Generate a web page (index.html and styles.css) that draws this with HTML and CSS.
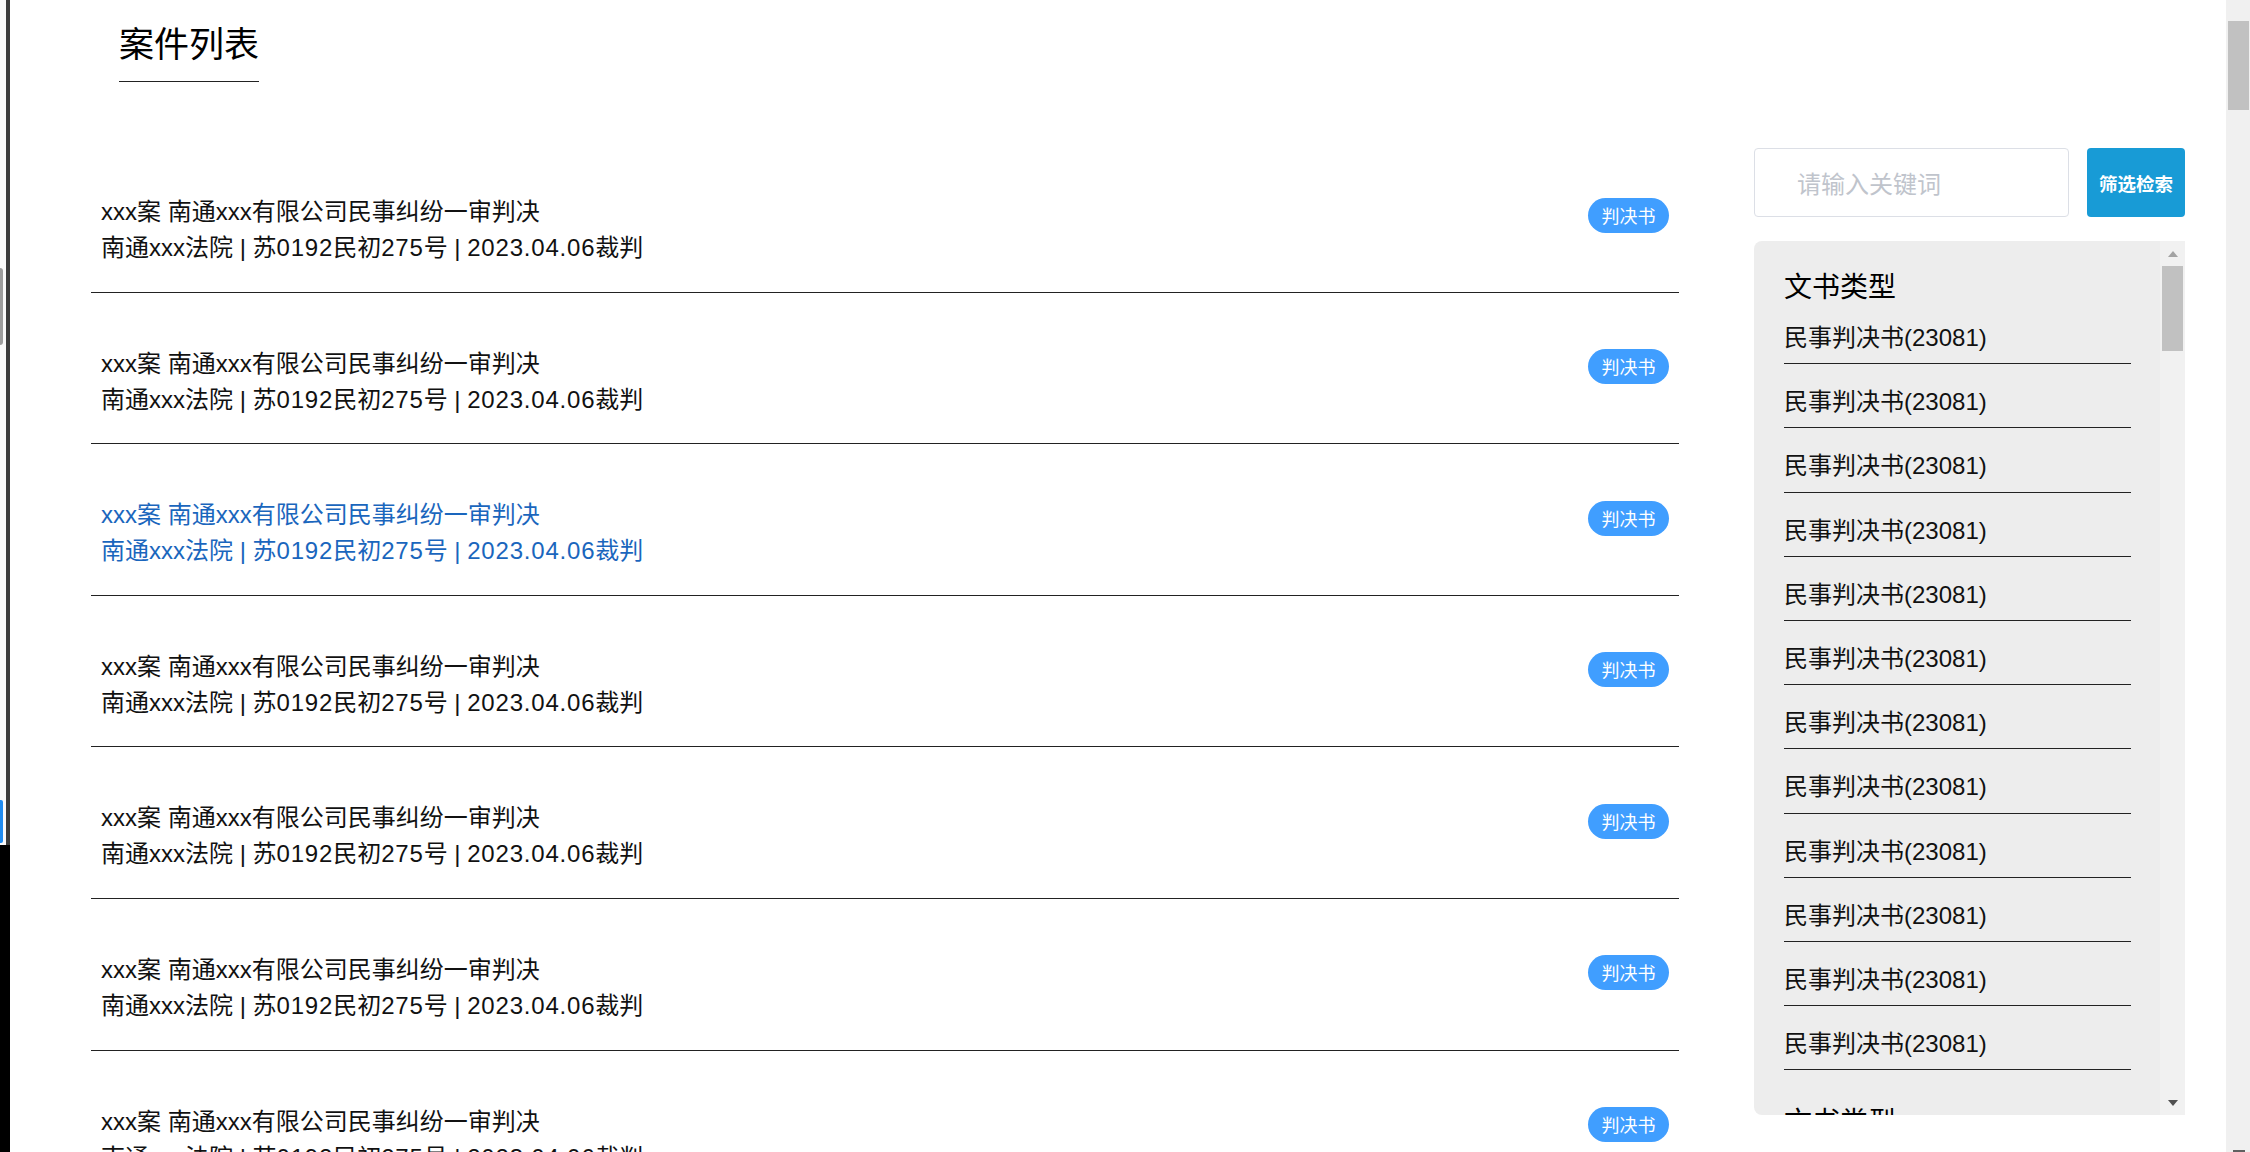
FILE: index.html
```html
<!DOCTYPE html>
<html lang="zh-CN">
<head>
<meta charset="utf-8">
<title>案件列表</title>
<link rel="stylesheet" href="styles.css">
</head>
<body>
<div class="frame">
  <div class="edge">
    <div class="edge-top">
      <div class="edge-light">
        <div class="edge-gray"></div>
        <div class="edge-blue"></div>
      </div>
      <div class="edge-dark"></div>
    </div>
    <div class="edge-bottom"></div>
  </div>

  <div class="page">
    <div class="header">
      <h2 class="title">案件列表</h2>
    </div>

    <div class="content">
      <div class="list">
        <div class="row">
          <div class="row-text"><div>xxx案 南通xxx有限公司民事纠纷一审判决</div><div>南通xxx法院 | 苏<span class="num">0192</span>民初<span class="num">275</span>号 | <span class="num">2023.04.06</span>裁判</div></div>
          <span class="badge">判决书</span>
        </div>
        <div class="row">
          <div class="row-text"><div>xxx案 南通xxx有限公司民事纠纷一审判决</div><div>南通xxx法院 | 苏<span class="num">0192</span>民初<span class="num">275</span>号 | <span class="num">2023.04.06</span>裁判</div></div>
          <span class="badge">判决书</span>
        </div>
        <div class="row row-active">
          <div class="row-text"><div>xxx案 南通xxx有限公司民事纠纷一审判决</div><div>南通xxx法院 | 苏<span class="num">0192</span>民初<span class="num">275</span>号 | <span class="num">2023.04.06</span>裁判</div></div>
          <span class="badge">判决书</span>
        </div>
        <div class="row">
          <div class="row-text"><div>xxx案 南通xxx有限公司民事纠纷一审判决</div><div>南通xxx法院 | 苏<span class="num">0192</span>民初<span class="num">275</span>号 | <span class="num">2023.04.06</span>裁判</div></div>
          <span class="badge">判决书</span>
        </div>
        <div class="row">
          <div class="row-text"><div>xxx案 南通xxx有限公司民事纠纷一审判决</div><div>南通xxx法院 | 苏<span class="num">0192</span>民初<span class="num">275</span>号 | <span class="num">2023.04.06</span>裁判</div></div>
          <span class="badge">判决书</span>
        </div>
        <div class="row">
          <div class="row-text"><div>xxx案 南通xxx有限公司民事纠纷一审判决</div><div>南通xxx法院 | 苏<span class="num">0192</span>民初<span class="num">275</span>号 | <span class="num">2023.04.06</span>裁判</div></div>
          <span class="badge">判决书</span>
        </div>
        <div class="row">
          <div class="row-text"><div>xxx案 南通xxx有限公司民事纠纷一审判决</div><div>南通xxx法院 | 苏<span class="num">0192</span>民初<span class="num">275</span>号 | <span class="num">2023.04.06</span>裁判</div></div>
          <span class="badge">判决书</span>
        </div>
      </div>

      <div class="side">
        <div class="search">
          <input class="search-input" type="text" placeholder="请输入关键词">
          <button class="search-btn" type="button">筛选检索</button>
        </div>
        <div class="panel">
          <div class="panel-body">
            <div class="group">
              <h3 class="group-title">文书类型</h3>
              <div class="item">民事判决书(23081)</div>
              <div class="item">民事判决书(23081)</div>
              <div class="item">民事判决书(23081)</div>
              <div class="item">民事判决书(23081)</div>
              <div class="item">民事判决书(23081)</div>
              <div class="item">民事判决书(23081)</div>
              <div class="item">民事判决书(23081)</div>
              <div class="item">民事判决书(23081)</div>
              <div class="item">民事判决书(23081)</div>
              <div class="item">民事判决书(23081)</div>
              <div class="item">民事判决书(23081)</div>
              <div class="item">民事判决书(23081)</div>
            </div>
            <div class="group">
              <h3 class="group-title">文书类型</h3>
              <div class="item">民事判决书(23081)</div>
              <div class="item">民事判决书(23081)</div>
            </div>
          </div>
          <div class="panel-scroll">
            <div class="arrow-up"></div>
            <div class="panel-thumb"></div>
            <div class="arrow-down"></div>
          </div>
        </div>
      </div>
    </div>
  </div>

  <div class="page-scroll">
    <div class="page-thumb"></div>
    <div class="page-arrow-down"></div>
  </div>
</div>
</body>
</html>
```

FILE: styles.css
```css
html, body {
  margin: 0;
  padding: 0;
  height: 100%;
  overflow: hidden;
  background: #ffffff;
}

body {
  font-family: "Noto Sans CJK SC", "Microsoft YaHei", sans-serif;
  color: #111111;
}

.frame {
  display: flex;
  width: 2250px;
  height: 1152px;
}

/* left window edge */
.edge {
  flex: 0 0 10px;
  display: flex;
  flex-direction: column;
}

.edge-top {
  height: 845px;
  display: flex;
}

.edge-light {
  width: 6px;
  background: #f9f9f9;
  display: flex;
  flex-direction: column;
  padding-top: 268px;
  box-sizing: border-box;
}

.edge-gray {
  width: 3px;
  height: 77px;
  background: #9c9c9c;
  border-radius: 0 3px 3px 0;
}

.edge-blue {
  width: 3px;
  height: 43px;
  margin-top: auto;
  margin-bottom: 2px;
  background: #1f8bf0;
  border-radius: 0 2px 2px 0;
}

.edge-dark {
  width: 4px;
  background: #3b3b3b;
}

.edge-bottom {
  flex: 1;
  background: #000000;
}

/* main page */
.page {
  flex: 1;
  overflow: hidden;
}

.header {
  padding: 15px 0 0 109px;
}

.title {
  display: inline-block;
  margin: 0;
  font-size: 35px;
  line-height: 54px;
  font-weight: normal;
  color: #000;
  padding-bottom: 12px;
  border-bottom: 1px solid #222;
}

.content {
  display: flex;
  align-items: flex-start;
  margin-top: 59px;
  padding: 0 41px 0 81px;
}

.list {
  flex: 0 0 1588px;
}

.row {
  display: flex;
  justify-content: space-between;
  align-items: flex-start;
  box-sizing: border-box;
  height: 151.6px;
  padding: 53px 10px 0;
  border-bottom: 1px solid #222;
  color: #111;
}

.row-text {
  font-family: "Liberation Sans", "Noto Sans CJK SC", sans-serif;
  font-size: 24px;
  line-height: 36px;
}

.num {
  letter-spacing: 0.8px;
}

.row-active {
  color: #1a66bd;
}

.badge {
  margin-top: 3.5px;
  height: 35px;
  line-height: 35px;
  padding: 0 13.5px;
  border-radius: 18px;
  background: #409eff;
  color: #ffffff;
  font-size: 18px;
}

/* side column */
.side {
  flex: 0 0 431px;
  margin-left: auto;
  padding-top: 7px;
}

.search {
  display: flex;
  gap: 18px;
}

.search-input {
  width: 315px;
  height: 69px;
  box-sizing: border-box;
  border: 1px solid #dcdfe6;
  border-radius: 4px;
  padding: 0 0 0 42px;
  font-family: inherit;
  font-size: 24px;
  color: #333;
  outline: none;
}

.search-input::placeholder {
  color: #c0c4cc;
}

.search-btn {
  width: 98px;
  height: 69px;
  border: none;
  border-radius: 4px;
  background: #189bd6;
  color: #ffffff;
  font-family: inherit;
  font-size: 18.5px;
  font-weight: bold;
  padding: 0;
}

.panel {
  margin-top: 24px;
  height: 874px;
  display: flex;
  background: #ededed;
  border-radius: 8px 0 0 8px;
  overflow: hidden;
}

.panel-body {
  flex: 1;
  padding: 29px 29px 0 30px;
  overflow: hidden;
}

.group + .group {
  margin-top: 35px;
}

.group-title {
  margin: 0;
  font-size: 28px;
  line-height: 30px;
  font-weight: normal;
  color: #000;
}

.item {
  padding: 20px 0 7.2px;
  font-family: "Liberation Sans", "Noto Sans CJK SC", sans-serif;
  font-size: 24px;
  line-height: 36px;
  border-bottom: 1px solid #222;
  color: #111;
}

.panel-scroll {
  flex: 0 0 25px;
  background: #f1f1f1;
  display: flex;
  flex-direction: column;
  align-items: center;
  padding-top: 10px;
  box-sizing: border-box;
}

.arrow-up {
  width: 0;
  height: 0;
  border-left: 5.5px solid transparent;
  border-right: 5.5px solid transparent;
  border-bottom: 6px solid #a3a3a3;
}

.panel-thumb {
  margin-top: 9px;
  width: 21px;
  height: 85px;
  background: #c1c1c1;
}

.arrow-down {
  margin-top: auto;
  margin-bottom: 9px;
  width: 0;
  height: 0;
  border-left: 5.5px solid transparent;
  border-right: 5.5px solid transparent;
  border-top: 6px solid #505050;
}

/* page scrollbar */
.page-scroll {
  flex: 0 0 24px;
  background: #f0f0f0;
  padding: 21px 1px 0 2px;
  box-sizing: border-box;
  display: flex;
  flex-direction: column;
  align-items: stretch;
}

.page-thumb {
  height: 89px;
  background: #c1c1c1;
}

.page-arrow-down {
  margin-top: auto;
  align-self: center;
  width: 12px;
  height: 2px;
  background: #606060;
}
```
